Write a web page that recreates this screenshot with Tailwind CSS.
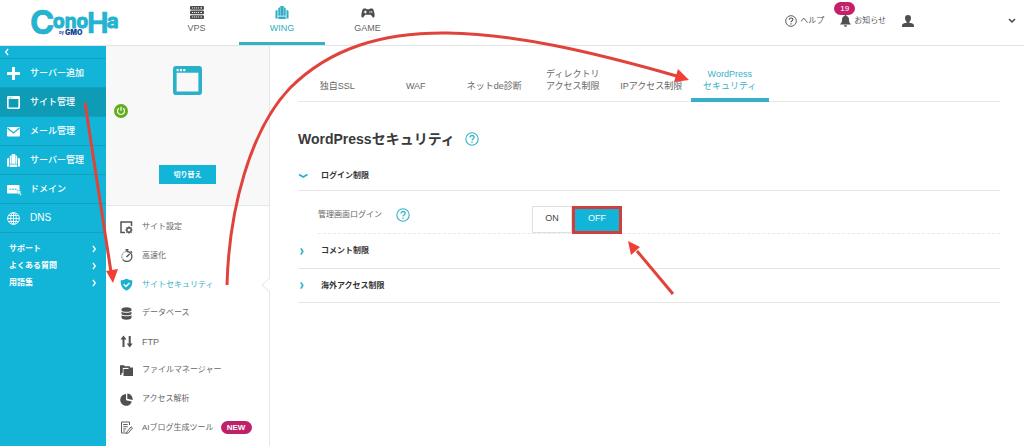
<!DOCTYPE html>
<html lang="ja">
<head>
<meta charset="utf-8">
<meta name="viewport" content="width=device-width, initial-scale=1">
<title>WordPressセキュリティ</title>
<script src="https://cdn.jsdelivr.net/npm/@tailwindcss/browser@4"></script>
</head>
<body class="relative flex min-h-screen flex-col overflow-x-hidden bg-white font-['Liberation_Sans','Noto_Sans_CJK_JP',sans-serif] text-[8px] leading-3 text-[#666]">
<svg class="hidden">
  <symbol id="window" viewBox="0 0 28 28"><path fill="currentColor" fill-rule="evenodd" d="M3 0h22a3 3 0 0 1 3 3v22a3 3 0 0 1-3 3H3a3 3 0 0 1-3-3V3a3 3 0 0 1 3-3ZM3.500 6.500v18h21v-18ZM3.500 3v2h2V3ZM6.700 3v2h2V3ZM9.900 3v2h2V3Z"/></symbol>
  <symbol id="wing" viewBox="0 0 14 14"><path fill="currentColor" d="M0 5 2.200 4v9.500H0ZM14 5l-2.200-1v9.500H14ZM3 2.500 4.800 1v9.500H3ZM11 2.500 9.200 1v9.500H11ZM5.200 0h3.600v10.500H5.200ZM3 11.200h8V14H3Z"/></symbol>
  <symbol id="help" viewBox="0 0 14 14"><circle cx="7" cy="7" r="6.200" fill="none" stroke="currentColor" stroke-width="1.100"/><path d="M5 5.500c0-2.800 4.200-2.500 4.200-.2C9.200 6.800 7 6.700 7 8.600M7 9.700V11" fill="none" stroke="currentColor" stroke-width="1.300"/></symbol>
  <symbol id="chev" viewBox="0 0 6 10"><path d="m1 1 3 4-3 4" fill="none" stroke="currentColor" stroke-width="1.700"/></symbol>
</svg>

<header class="flex h-[46px] shrink-0 border-b border-[#e2e3e5]">
  <a href="#" aria-label="ConoHa by GMO" class="ml-[30px] w-[124px]">
    <svg width="92" height="40" viewBox="0 0 92 40" font-family="Inter, sans-serif" font-weight="700" fill="#25b3cf" stroke="#25b3cf">
      <text x="0" y="34" font-size="33" stroke-width=".6">C</text>
      <text x="23" y="28" font-size="19" stroke-width="1">ono</text>
      <text x="57" y="33" font-size="29" stroke-width=".4">H</text>
      <text x="77" y="28" font-size="20" stroke-width="1">a</text>
      <text x="29" y="34" font-size="4" fill="#14459a" stroke="none">by</text>
      <text x="35" y="35" font-size="7" font-weight="900" fill="#14459a" stroke="none">GMO</text>
    </svg>
  </a>
  <nav class="flex text-[9px]">
    <a href="#" class="flex w-[85px] flex-col items-center pt-[6px] text-[#666]">
      <svg class="mb-[3px] h-[13px] w-[14px]" viewBox="0 0 14 13"><g fill="#4d4d4d"><rect width="14" height="3.700" rx="1"/><rect y="4.600" width="14" height="3.700" rx="1"/><rect y="9.200" width="14" height="3.700" rx="1"/></g><path d="M2 1.900h7M2 6.500h7M2 11h7" stroke="#fff" stroke-width=".9" stroke-dasharray="1.200 .8"/><path d="M10.500 1.900h1.500M10.500 6.500h1.500M10.500 11h1.500" stroke="#fff" stroke-width="1.200"/></svg>VPS</a>
    <a href="#" class="flex w-[86px] flex-col items-center border-b-[3px] border-[#35b0c7] pt-[6px] text-[#2fadc4]"><svg class="mb-[3px] h-[13px] w-[14px]"><use href="#wing"/></svg>WING</a>
    <a href="#" class="flex w-[85px] flex-col items-center pt-[6px] text-[#666]">
      <svg class="mb-[3px] h-[13px] w-[14px]" viewBox="0 0 14 13"><path fill="#4d4d4d" d="M3 2.500h2l.7.800h2.600l.7-.8h2c1.200 0 1.800 1.500 2.300 4.200.5 2.300.6 4.800-.8 4.800-1.300 0-2-2.500-3-2.800h-5c-1 .3-1.700 2.800-3 2.800C.100 11.500.200 9 .700 6.700 1.200 4 1.800 2.500 3 2.500Z"/><path d="M2.800 6h3M4.300 4.500v3" stroke="#fff"/><circle cx="9" cy="6" r=".7" fill="#fff"/><circle cx="10.800" cy="6" r=".7" fill="#fff"/></svg>GAME</a>
  </nav>
  <div class="ml-auto flex h-[42px] items-center text-[#555]">
    <a href="#" class="flex items-center gap-[3px]"><svg class="size-3"><use href="#help"/></svg>ヘルプ</a>
    <a href="#" class="relative ml-4 flex items-center gap-[3px]">
      <svg class="h-3 w-[11px]" viewBox="0 0 11 12"><path fill="#505050" d="M5.500 0c.7 0 1 .5 1 1 2 .5 2.500 2 2.500 4s.5 2.800 2 4.500H0C1.500 7.800 2 7 2 5s.5-3.500 2.500-4c0-.5.300-1 1-1ZM4 10.200h3c0 2-3 2-3 0Z"/></svg>お知らせ
      <span class="absolute -top-[13px] -left-[6px] flex h-[13px] w-[21px] items-center justify-center rounded-full bg-[#c3206b] text-white">19</span>
    </a>
    <button aria-label="アカウント" class="ml-4 flex w-[114px] items-center justify-between">
      <svg class="size-3" viewBox="0 0 12 12"><path fill="#505050" d="M6 0c2 0 3 1.300 3 3 0 1.500-.6 3-1.600 3.700v1C9.500 8.200 12 8.500 12 10.500V12H0v-1.500c0-2 2.500-2.300 4.600-2.800v-1C3.600 6 3 4.500 3 3c0-1.700 1-3 3-3Z"/></svg>
      <svg class="h-[6px] w-2" viewBox="0 0 8 6"><path d="m1 1 3 3 3-3" fill="none" stroke="#444" stroke-width="1.500"/></svg>
    </button>
    <span class="w-2"></span>
  </div>
</header>

<div class="flex grow">
  <aside class="w-[106px] shrink-0 bg-[#12b5d8] text-white">
    <button aria-label="メニューを閉じる" class="flex h-[12px] w-full items-center pl-1"><svg class="h-2 w-[5px] rotate-180"><use href="#chev"/></svg></button>
    <nav class="border-b border-[#0fa2c1] text-[9px] font-medium">
      <a href="#" class="flex h-[29px] items-center gap-[10px] border-t border-[#0fa2c1] pl-[7px]"><svg class="size-[13px]" viewBox="0 0 13 13"><path d="M6.500 0v13M0 6.500h13" stroke="#fff" stroke-width="3"/></svg>サーバー追加</a>
      <a href="#" class="flex h-[29px] items-center gap-[10px] border-t border-[#0fa2c1] bg-[#0e9bb5] pl-[7px]"><svg class="size-[13px]"><use href="#window"/></svg>サイト管理</a>
      <a href="#" class="flex h-[29px] items-center gap-[10px] border-t border-[#0fa2c1] pl-[7px]"><svg class="size-[13px]" viewBox="0 0 13 13"><rect y="2" width="13" height="9.500" rx="1" fill="#fff"/><path d="m.5 3 6 5 6-5" fill="none" stroke="#12b5d8" stroke-width="1.200"/></svg>メール管理</a>
      <a href="#" class="flex h-[29px] items-center gap-[10px] border-t border-[#0fa2c1] pl-[7px]"><svg class="size-[13px]"><use href="#wing"/></svg>サーバー管理</a>
      <a href="#" class="flex h-[29px] items-center gap-[8px] border-t border-[#0fa2c1] pl-[7px]"><svg class="h-[13px] w-[15px]" viewBox="0 0 15 13"><rect y="2" width="12.500" height="8.500" rx="1" fill="#fff"/><path d="M2.500 6.200h7.500" stroke="#12b5d8" stroke-width="1" stroke-dasharray="1.800 .8"/><path d="m10 7 5 2-2 .7 1.800 2-1 .9-1.700-2-1 1.400Z" fill="#fff" stroke="#12b5d8" stroke-width=".4"/></svg>ドメイン</a>
      <a href="#" class="flex h-[29px] items-center gap-[10px] border-t border-[#0fa2c1] pl-[7px] text-[10px]"><svg class="size-[13px]" viewBox="0 0 13 13" fill="none" stroke="#fff" stroke-width=".9"><circle cx="6.500" cy="6.500" r="5.900"/><ellipse cx="6.500" cy="6.500" rx="2.800" ry="5.900"/><path d="M6.500.6v11.800M.6 6.500h11.800M1.500 3.500h10M1.500 9.500h10"/></svg>DNS</a>
    </nav>
    <nav class="flex flex-col gap-[5px] px-[9px] pt-[10px] font-bold">
      <a href="#" class="flex items-center justify-between">サポート<svg class="h-2 w-[5px]"><use href="#chev"/></svg></a>
      <a href="#" class="flex items-center justify-between">よくある質問<svg class="h-2 w-[5px]"><use href="#chev"/></svg></a>
      <a href="#" class="flex items-center justify-between">用語集<svg class="h-2 w-[5px]"><use href="#chev"/></svg></a>
    </nav>
  </aside>

  <section class="relative w-[164px] shrink-0 border-r border-[#e6e6e6]">
    <div class="relative flex h-[160px] flex-col items-center justify-between border-b border-[#e6e6e6] bg-[#f8f8f8] pt-5 pb-[21px]">
      <svg class="size-[29px] text-[#2bb0ca]"><use href="#window"/></svg>
      <svg class="absolute top-[58px] left-[8px] size-[14px]" viewBox="0 0 14 14"><circle cx="7" cy="7" r="7" fill="#62ad1d"/><path d="M4.800 4.300a3.500 3.500 0 1 0 4.400 0M7 2.800v4" fill="none" stroke="#fff" stroke-width="1.200"/></svg>
      <button class="h-[19px] w-[57px] bg-[#12b5d8] text-[7px] font-bold text-white">切り替え</button>
    </div>
    <nav class="mt-[7px] flex h-[229px] flex-col pl-[14px] *:flex *:flex-1 *:items-center *:gap-[9px]">
      <a href="#"><svg class="size-[13px]" viewBox="0 0 13 13" fill="none" stroke="#555"><path d="M5 11.500H1V1h10.500v4" stroke-width="1.500"/><circle cx="9" cy="9" r="2.200" stroke-width="1.400"/><path d="M9 5.300v7.400M5.300 9h7.400M6.400 6.400l1 1M10.600 10.600l1 1M11.600 6.400l-1 1M7.400 10.600l-1 1" stroke-width="1.100"/><circle cx="9" cy="9" r="1.300" fill="#fff" stroke="none"/></svg>サイト設定</a>
      <a href="#"><svg class="size-[13px]" viewBox="0 0 13 13" fill="none" stroke="#555"><path d="M7 2.500a5 5 0 1 1-4 8.200" stroke-width="1.300"/><path d="M3 10.700A5 5 0 0 1 7 2.500" stroke-dasharray="1.200 1"/><path d="M5.500.7h3M7 .7v2M10.700 2.300l1.300 1.300M6.500 8l3-3" stroke-width="1.400"/></svg>高速化</a>
      <a href="#" class="text-[#35b3c8]"><svg class="size-[13px]" viewBox="0 0 13 13"><path fill="#1eb1cd" d="M6.500.5C8 1.700 10 2.200 12.300 2.300c.3 5-1.500 8.500-5.800 10.400C2.200 10.800.400 7.300.700 2.300 3 2.200 5 1.700 6.500.5Z"/><path d="m3.700 6.300 2.200 2.200L9.500 5" fill="none" stroke="#fff" stroke-width="1.500"/></svg>サイトセキュリティ</a>
      <a href="#"><svg class="size-[13px]" viewBox="0 0 13 13" fill="#505050"><path d="M1.500 2.200C1.500-.500 11.500-.500 11.500 2.200v1c0 2-10 2-10 0ZM1.500 4.700c1.500 1.500 8.500 1.500 10 0v2c0 2-10 2-10 0ZM1.500 8.200c1.500 1.500 8.500 1.500 10 0v2.300c0 3-10 3-10 0Z"/></svg>データベース</a>
      <a href="#"><svg class="size-[13px]" viewBox="0 0 13 13" fill="#505050"><path d="M3.500.500 6.500 4.500h-2V12h-2V4.500h-2ZM9.700 12.500l-3-4h2V1h2v7.500h2Z"/></svg><span class="text-[9px]">FTP</span></a>
      <a href="#"><svg class="size-[13px]" viewBox="0 0 13 13" fill="#505050"><path d="M0 1.500h4l1 1h5v1.200H2.800V9H1.500L0 10ZM3.500 5h4.700l1-1.500H13V12H3.500Z"/><path d="M0 1.500h4l1 1h5v1H1.500V11H0Z"/></svg>ファイルマネージャー</a>
      <a href="#"><svg class="size-[13px]" viewBox="0 0 13 13" fill="#505050"><path d="M6 1v6.200l5.800 1.300A5.900 5.900 0 1 1 6 1ZM7.300.500A5.800 5.800 0 0 1 12.600 7L7.300 5.800Z"/></svg>アクセス解析</a>
      <a href="#"><svg class="size-[13px]" viewBox="0 0 13 13" fill="none" stroke="#606060"><path d="M9.500 4V1h-8v11h5M3.200 3.500h4.500M3.200 5.700h4.500M3.200 7.900h3M3.200 10h2"/><path d="m7 10.800 4-5 1.500 1.200-4 4.800L6.500 12.500Z"/></svg><span>AIブログ生成ツール</span><span class="-ml-[2px] flex h-[13px] w-[31px] items-center justify-center rounded-full bg-[#bd2167] font-bold text-white">NEW</span></a>
    </nav>
    <svg class="absolute top-[232px] -right-px h-[14px] w-[9px]" viewBox="0 0 9 14"><path d="M9 0 1 7l8 7" fill="#fff" stroke="#e2e2e2"/></svg>
  </section>

  <main class="min-w-0 flex-1 pr-6 pl-7">
    <nav class="border-b border-[#e8e8e8]">
      <div class="grid h-[55px] w-[471px] grid-cols-6 text-center text-[9px] *:flex *:items-end *:justify-center *:pb-[9px]">
        <a href="#">独自SSL</a>
        <a href="#">WAF</a>
        <a href="#">ネットde診断</a>
        <a href="#">ディレクトリ<br>アクセス制限</a>
        <a href="#">IPアクセス制限</a>
        <a href="#" class="-mb-px border-b-[4px] border-[#35b0c7] pb-[6px]! text-[#35b3c8]">WordPress<br>セキュリティ</a>
      </div>
    </nav>
    <h1 class="mt-[27px] flex h-5 items-center gap-[10px] text-[14px] font-bold text-[#3a3a3a]">WordPressセキュリティ
      <button aria-label="ヘルプ" class="text-[#35b3c8]"><svg class="size-[14px]"><use href="#help"/></svg></button>
    </h1>
    <h2 class="mt-3 border-b border-[#e5e5e5] text-[#333]"><button class="flex h-[29px] w-full items-center gap-3 font-bold"><svg class="h-[6px] w-[11px]" viewBox="0 0 11 6"><path d="m1 1.500 4.200 2.500 4.300-2.500" fill="none" stroke="#2bb0ca" stroke-width="1.700"/></svg>ログイン制限</button></h2>
    <div class="ml-5 flex h-[43px] items-end border-b border-dashed border-[#e8e8e8]">
      <span id="login" class="flex h-9 w-[214px] items-center gap-[14px]">管理画面ログイン<button aria-label="ヘルプ" class="text-[#35b3c8]"><svg class="size-[14px]"><use href="#help"/></svg></button></span>
      <div role="group" aria-labelledby="login" class="-mb-px flex h-[28px] text-[9px]">
        <button class="mb-px w-10 border border-[#e0e0e0] pb-1 text-[#444]">ON</button>
        <button aria-pressed="true" class="w-[50px] border-[3px] border-[#d23e3b] bg-[#12b5d8] pb-1 text-white">OFF</button>
      </div>
    </div>
    <h2 class="border-b border-[#e5e5e5] text-[#333]"><button class="flex h-[34px] w-full items-center gap-[17px] pl-[2px] font-bold"><svg class="h-[9px] w-1" viewBox="0 0 5 10"><path d="m1 1 2.500 4L1 9" fill="none" stroke="#2bb0ca" stroke-width="2"/></svg>コメント制限</button></h2>
    <h2 class="border-b border-[#e5e5e5] text-[#333]"><button class="flex h-[33px] w-full items-center gap-[17px] pl-[2px] font-bold"><svg class="h-[9px] w-1" viewBox="0 0 5 10"><path d="m1 1 2.500 4L1 9" fill="none" stroke="#2bb0ca" stroke-width="2"/></svg>海外アクセス制限</button></h2>
  </main>
</div>

<svg class="pointer-events-none absolute top-0 left-0" width="1024" height="446" viewBox="0 0 1024 446" fill="none" stroke="#e0433b" stroke-width="3">
  <path d="M85 103 111 272M227 285C229 210 250 130 290 88C370 8 500 25 680 77M673 294 637 251"/>
  <g fill="#f23f33" stroke="none"><path d="M113 283 106 271 118 269ZM689 80 678 69 674 82ZM628 241 640 247 631 255Z"/></g>
</svg>
</body>
</html>
